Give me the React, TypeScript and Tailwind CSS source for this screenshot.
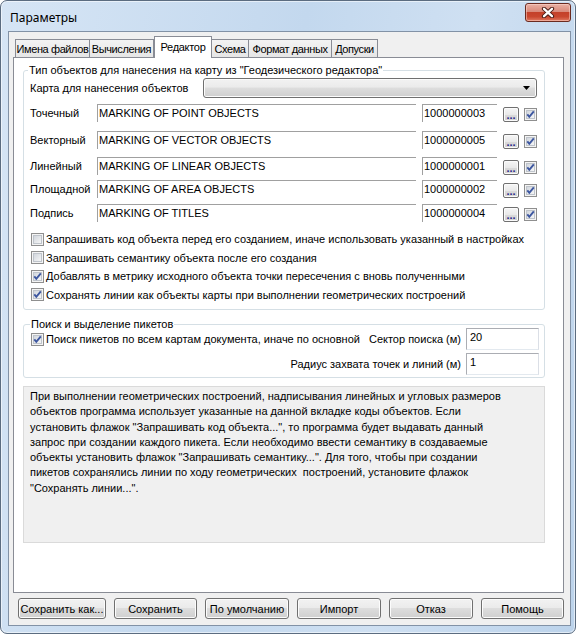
import React from "react";

function Check({ checked }: { checked: boolean }) {
  return (
    <svg width="13" height="13" viewBox="0 0 13 13" className="shrink-0 block">
      <defs>
        <linearGradient id="cbIn" x1="0" y1="0" x2="1" y2="1">
          <stop offset="0" stopColor="#cfd4db" />
          <stop offset="1" stopColor="#f8f8f8" />
        </linearGradient>
      </defs>
      <rect x="0.5" y="0.5" width="12" height="12" fill="#f4f4f4" stroke="#8f8f8f" />
      <rect x="2.5" y="2.5" width="8" height="8" fill="url(#cbIn)" stroke="#bfc4cb" />
      {checked && (
        <path d="M3.3 6.4 L5.3 8.8 L9.8 3.3" fill="none" stroke="#3d57a0" strokeWidth="1.9" />
      )}
    </svg>
  );
}

function Dots() {
  return (
    <div className="w-[16px] h-[15px] rounded-[2px] border border-[#707070] bg-[linear-gradient(#f6f6f6,#e9e9e9_50%,#dadada_51%,#d0d0d0)] shadow-[inset_0_0_0_1px_#fbfbfb] flex items-end justify-center text-[#2a2a8a] text-[11px] leading-[9px] font-bold pb-[1px] shrink-0">
      ...
    </div>
  );
}

function Btn({ w, children }: { w: string; children: React.ReactNode }) {
  return (
    <div
      className={
        w +
        " h-[21px] rounded-[3px] border border-[#707070] bg-[linear-gradient(#f2f2f2,#ebebeb_45%,#dddddd_50%,#cfcfcf)] shadow-[inset_0_0_0_1px_#fcfcfc] flex items-center justify-center overflow-hidden whitespace-nowrap shrink-0"
      }
    >
      <span className="shrink-0">{children}</span>
    </div>
  );
}

const rows = [
  { label: "Точечный", name: "MARKING OF POINT OBJECTS", code: "1000000003", mt: "mt-[6px]" },
  { label: "Векторный", name: "MARKING OF VECTOR OBJECTS", code: "1000000005", mt: "mt-[9px]" },
  { label: "Линейный", name: "MARKING OF LINEAR OBJECTS", code: "1000000001", mt: "mt-[8px]" },
  { label: "Площадной", name: "MARKING OF AREA OBJECTS", code: "1000000002", mt: "mt-[5px]" },
  { label: "Подпись", name: "MARKING OF TITLES", code: "1000000004", mt: "mt-[6px]" },
];

const checks = [
  { t: "Запрашивать код объекта перед его созданием, иначе использовать указанный в настройках", c: false },
  { t: "Запрашивать семантику объекта после его создания", c: false },
  { t: "Добавлять в метрику исходного объекта точки пересечения с вновь полученными", c: true },
  { t: "Сохранять линии как объекты карты при выполнении геометрических построений", c: true },
];

const descLines = [
  "При выполнении геометрических построений, надписывания линейных и угловых размеров",
  "объектов программа использует указанные на данной вкладке коды объектов. Если",
  "установить флажок \"Запрашивать код объекта...\", то программа будет выдавать данный",
  "запрос при создании каждого пикета. Если необходимо ввести семантику в создаваемые",
  "объекты установить флажок \"Запрашивать семантику...\". Для того, чтобы при создании",
  "пикетов сохранялись линии по ходу геометрических  построений, установите флажок",
  "\"Сохранять линии...\".",
];

const tabBase =
  "h-[18px] border border-b-0 border-[#898c95] bg-[linear-gradient(#f3f3f3,#e6e6e6)] flex items-center justify-center tracking-[-0.4px]";

export default function App() {
  return (
    <div className="w-[581px] h-[638px] bg-white font-['Liberation_Sans',Arial,sans-serif] text-[11px] text-black leading-[14px]">
      <div className="w-[576px] h-[634px] rounded-[7px] border border-[#5b6c80] bg-[linear-gradient(100deg,#d6e5f5,#c3d8ee_45%,#cfe0f2_70%,#bcd3eb)] shadow-[inset_0_0_0_1px_rgba(255,255,255,0.55)] flex flex-col pl-[7px] pr-[4px] pb-[7px]">
        {/* title bar */}
        <div className="h-[30px] flex items-start justify-between shrink-0">
          <div className="pl-[2px] pt-[9px] font-['Noto_Sans',sans-serif] text-[12px] leading-[16px] text-black">
            Параметры
          </div>
          <div className="mt-[2px] w-[46px] h-[19px] rounded-[3px] border border-[#6a2a20] bg-[linear-gradient(#eab0a4,#d98a7b_45%,#c4412a_50%,#c9472f_75%,#e07a62)] shadow-[inset_0_0_0_1px_rgba(255,220,210,0.5)] flex items-center justify-center">
            <svg width="14" height="11" viewBox="0 0 14 11">
              <path d="M3 1.8 L11 9.2 M11 1.8 L3 9.2" stroke="#4a1c15" strokeWidth="4.2" strokeLinecap="round" fill="none" />
              <path d="M3 1.8 L11 9.2 M11 1.8 L3 9.2" stroke="#ffffff" strokeWidth="2.3" strokeLinecap="round" fill="none" />
            </svg>
          </div>
        </div>

        {/* client area */}
        <div className="flex-1 border border-[#8292a6] bg-[#f0f0f0] flex flex-col">
          {/* tabs */}
          <div className="flex items-end pl-[6px] pt-[4px] h-[25px] shrink-0 whitespace-nowrap">
            <div className={"w-[75px] " + tabBase}>Имена файлов</div>
            <div className={"w-[64px] border-l-0 " + tabBase}>Вычисления</div>
            <div className="relative z-10 w-[58px] h-[22px] -mb-px border border-b-0 border-[#898c95] bg-white flex items-start justify-center pt-[3px] tracking-[-0.3px]">Редактор</div>
            <div className={"w-[37px] border-l-0 " + tabBase}>Схема</div>
            <div className={"w-[83px] border-l-0 " + tabBase}>Формат данных</div>
            <div className={"w-[46px] border-l-0 " + tabBase}>Допуски</div>
          </div>

          {/* panel */}
          <div className="ml-[4px] w-[551px] h-[536px] border border-[#898c95] bg-white shrink-0 pl-[9px] pt-[12px]">
            {/* group 1 */}
            <div className="w-[522px] border border-[#d5dfe5] rounded-[3px] pl-[6px] pr-[7px] pb-[5px]">
              <div className="-mt-[8px] -ml-[2px] px-[1px] bg-white w-fit leading-[14px] whitespace-nowrap">
                Тип объектов для нанесения на карту из "Геодезического редактора"
              </div>
              <div className="flex items-center h-[20px] mt-[1px]">
                <div className="w-[174px] whitespace-nowrap">Карта для нанесения объектов</div>
                <div className="w-[335px] h-[20px] rounded-[3px] border border-[#707070] bg-[linear-gradient(#f2f2f2,#ebebeb_45%,#dddddd_50%,#cfcfcf)] shadow-[inset_0_0_0_1px_#fcfcfc] flex items-center justify-end pr-[6px]">
                  <svg width="7" height="4" viewBox="0 0 7 4">
                    <path d="M0 0 L7 0 L3.5 4 Z" fill="#000" />
                  </svg>
                </div>
              </div>
              {rows.map((r) => (
                <div key={r.code} className={"flex items-center h-[18px] " + r.mt}>
                  <div className="w-[67px] whitespace-nowrap">{r.label}</div>
                  <div className="w-[319px] h-[18px] border-t border-l border-[#a0a0a0] pl-[1px] leading-[16px] whitespace-nowrap overflow-hidden">
                    {r.name}
                  </div>
                  <div className="ml-[6px] w-[75px] h-[18px] border-t border-l border-[#a0a0a0] pl-[1px] leading-[16px] whitespace-nowrap overflow-hidden">
                    {r.code}
                  </div>
                  <div className="ml-[6px] mt-[3px]">
                    <Dots />
                  </div>
                  <div className="ml-[5px] mt-[2px]">
                    <Check checked={true} />
                  </div>
                </div>
              ))}
              <div className="mt-[8px]">
                {checks.map((c) => (
                  <div key={c.t} className="flex items-center h-[18.5px] pl-[1px] gap-[2px] whitespace-nowrap">
                    <Check checked={c.c} />
                    <span>{c.t}</span>
                  </div>
                ))}
              </div>
            </div>

            {/* group 2 */}
            <div className="w-[522px] mt-[14px] border border-[#d5dfe5] rounded-[3px] pl-[6px] pr-[5px] pb-[2px]">
              <div className="-mt-[8px] -mb-[3px] px-[1px] bg-white w-fit leading-[14px] whitespace-nowrap relative">
                Поиск и выделение пикетов
              </div>
              <div className="flex items-center h-[22px]">
                <div className="flex-1 flex items-center gap-[2px] pl-[1px] whitespace-nowrap">
                  <Check checked={true} />
                  <span>Поиск пикетов по всем картам документа, иначе по основной</span>
                </div>
                <div className="whitespace-nowrap">Сектор поиска (м)</div>
                <div className="ml-[5px] w-[73px] h-[22px] border border-[#abadb3] border-b-[#e3e9ef] border-r-[#dbdfe6] pl-[3px] pt-[1px] leading-[14px]">20</div>
              </div>
              <div className="flex items-center h-[22px] mt-[3px]">
                <div className="flex-1" />
                <div className="whitespace-nowrap">Радиус захвата точек и линий (м)</div>
                <div className="ml-[5px] w-[73px] h-[22px] border border-[#abadb3] border-b-[#e3e9ef] border-r-[#dbdfe6] pl-[3px] pt-[1px] leading-[14px]">1</div>
              </div>
            </div>

            {/* description */}
            <div className="w-[522px] h-[157px] mt-[8px] border border-[#dadada] bg-[#f0f0f0] pl-[6px] pt-[2px] leading-[15.3px]">
              {descLines.map((l, i) => (
                <div key={i} className="whitespace-pre">{l}</div>
              ))}
            </div>
          </div>

          {/* buttons */}
          <div className="flex gap-[8px] pl-[9px] mt-[5px]">
            <Btn w="w-[88px]">Сохранить как...</Btn>
            <Btn w="w-[83px]">Сохранить</Btn>
            <Btn w="w-[84px]">По умолчанию</Btn>
            <Btn w="w-[84px]">Импорт</Btn>
            <Btn w="w-[84px]">Отказ</Btn>
            <Btn w="w-[83px]">Помощь</Btn>
          </div>
        </div>
      </div>
    </div>
  );
}
